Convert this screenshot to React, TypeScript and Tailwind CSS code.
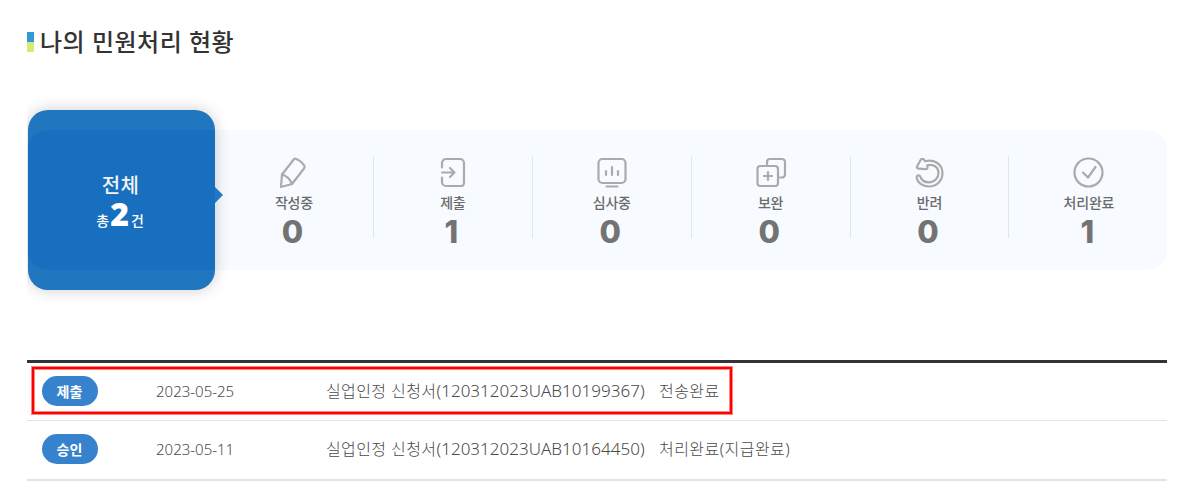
import type { ReactNode } from 'react';

const PencilIcon = () => (
  <>
    <path d="M16.3 1.500 C19.500 2.400 23 4.700 25.700 8.400 Q26.600 10 25.500 11.500 L13.500 27 L2.500 30 L3.500 17.500 L15.200 2.500 Q15.700 1.500 16.300 1.500Z" />
    <path d="M3.500 17.500 C8 18.800 11.500 21.800 13.500 27" />
  </>
);

const SubmitIcon = () => (
  <>
    <path d="M4.500 10.500V6a4 4 0 0 1 4-4h14a4 4 0 0 1 4 4v20a3 3 0 0 1-3 3H8.500a4 4 0 0 1-4-4v-4.500" />
    <path d="M4.500 15.500h12.500M12.500 11l4.500 4.500L12.500 20" />
  </>
);

const ReviewIcon = () => (
  <>
    <rect x="2" y="2" width="27" height="24" rx="4" />
    <path d="M9.500 14v4M15.500 10v8M21.500 14v4M10 29.500h11" />
  </>
);

const SupplementIcon = () => (
  <>
    <rect x="2" y="9" width="20.500" height="20" rx="3" />
    <path d="M11.500 8V5a3 3 0 0 1 3-3H26.500a3 3 0 0 1 3 3v12.500a3 3 0 0 1-3 3h-2M12.500 15v8M8.500 19h8" />
  </>
);

const ReturnIcon = () => (
  <path d="M6.500 2.200 Q8 1.200 9.500 2.500 L10.500 4.300 C19 1.700 28 7 28 16 C28 24 22 29.500 14.500 29.500 C7.500 29.500 2.500 25 2.200 20.500 C2 17.700 5.500 17.700 6.200 20.500 C7.500 24 11 25.300 14.500 25.300 C20 25.300 24 21 24 16 C24 10 18.500 6.700 12.700 8.200 L13 10.500 Q12.900 12.300 11.500 12.200 L4 11.700 Q1.900 11.200 2.500 9.500Z" />
);

const DoneIcon = () => (
  <>
    <circle cx="15" cy="15.500" r="14" />
    <path d="M9.500 15.500l5 5 7.500-10.500" />
  </>
);

interface Step {
  label: string;
  count: number;
  icon: ReactNode;
}

const steps: Step[] = [
  { label: '작성중', count: 0, icon: <PencilIcon /> },
  { label: '제출', count: 1, icon: <SubmitIcon /> },
  { label: '심사중', count: 0, icon: <ReviewIcon /> },
  { label: '보완', count: 0, icon: <SupplementIcon /> },
  { label: '반려', count: 0, icon: <ReturnIcon /> },
  { label: '처리완료', count: 1, icon: <DoneIcon /> },
];

const rows = [
  { status: '제출', date: '2023-05-25', title: '실업인정 신청서', id: '(120312023UAB10199367)', result: '전송완료' },
  { status: '승인', date: '2023-05-11', title: '실업인정 신청서', id: '(120312023UAB10164450)', result: '처리완료(지급완료)' },
];

function StepItem({ step }: { step: Step }) {
  return (
    <li className="flex h-[82px] w-[158.900px] flex-col items-center border-r border-[#d7eaf6] last:border-r-0">
      <svg className="mt-px h-8 w-8 shrink-0" viewBox="0 0 31 32" fill="none" stroke="#aaa" strokeWidth="2.200" strokeLinecap="round" strokeLinejoin="round">
        {step.icon}
      </svg>
      <span className="mt-[4px] text-[14px] leading-5 font-medium tracking-[-0.200px] text-[#6b6b6b]">{step.label}</span>
      <strong className="mt-[4px] mr-[3px] font-['Inter'] text-[31px] leading-[30px] font-extrabold text-[#737373]">{step.count}</strong>
    </li>
  );
}

export default function App() {
  return (
    <main className="h-[503px] w-[1196px] overflow-hidden bg-white pr-[29px] pl-[27px] font-['Noto_Sans','Noto_Sans_CJK_KR',sans-serif]">
      <h1 className="flex h-[84px] items-center gap-[6px] text-[24px] leading-9 font-medium tracking-[0.500px] text-[#333]">
        <span className="flex h-5 w-[7px] flex-col">
          <i className="h-[10px] bg-[#3399d1]" />
          <i className="h-[10px] bg-[#d5eb79]" />
        </span>
        <span className="whitespace-nowrap">나의 민원처리 현황</span>
      </h1>

      <section className="mt-[46px] flex h-[140px] items-center rounded-[20px] bg-[#f7fbff]">
        <div className="relative ml-px flex h-[180px] w-[187px] shrink-0 flex-col items-center rounded-[20px] bg-[#2176c0] text-white shadow-[0_0_15px_rgba(0,0,0,0.2)] [clip-path:inset(-20px_-20px_-20px_-1px)]">
          <div className="mt-5 flex h-[140px] w-full flex-col items-center rounded-l-[20px] bg-[#186fc0] pt-[46px]">
            <span className="mr-[2px] text-[20px] leading-5 font-medium tracking-[0.300px] text-[#f3f3f3]">전체</span>
            <span className="mt-[4px] mr-[3px] flex h-[28px] items-baseline text-[14px] leading-7 font-medium">
              총<strong className="mr-[2px] ml-px font-['Open_Sans'] text-[32px] leading-7 font-extrabold">2</strong>건
            </span>
          </div>
          <svg className="absolute top-[77px] left-full h-4 w-2" viewBox="0 0 8 16"><path d="M0 0l8 8-8 8Z" fill="#2277c2" /></svg>
        </div>
        <ul className="-mt-[6px] flex">
          {steps.map((step) => <StepItem key={step.label} step={step} />)}
        </ul>
      </section>

      <section className="mt-[90px] border-t-[3px] border-b-2 border-t-[#333] border-b-[#e3e3e3] text-[#4a4a4a]">
        {rows.map((row, index) => (
          <div key={row.id} className="relative flex h-[58px] items-center border-b border-[#e3e3e3] pb-px last:border-b-0 last:pb-[2px]">
            <span className="ml-[15px] flex h-[30px] w-14 items-center justify-center rounded-full bg-[#3682cc] pr-px text-[14px] font-bold text-white">{row.status}</span>
            <time className="ml-[58px] w-[170px] text-[15px] font-light">{row.date}</time>
            <span className="flex w-[333px] items-baseline text-[16px] font-light whitespace-nowrap">
              <span className="tracking-[0.400px]">{row.title}</span>
              <span className="text-[17px] tracking-[0.030px]">{row.id}</span>
            </span>
            <span className="text-[16px] font-light tracking-[0.450px] whitespace-nowrap">{row.result}</span>
            {index === 0 && (
              <span className="absolute top-[4px] left-[5px] h-[47px] w-[700px] border-2 border-[#fe0000] shadow-[0_0_0_1px_#ff8585,inset_0_0_0_1px_#ff8585]" />
            )}
          </div>
        ))}
      </section>
    </main>
  );
}
